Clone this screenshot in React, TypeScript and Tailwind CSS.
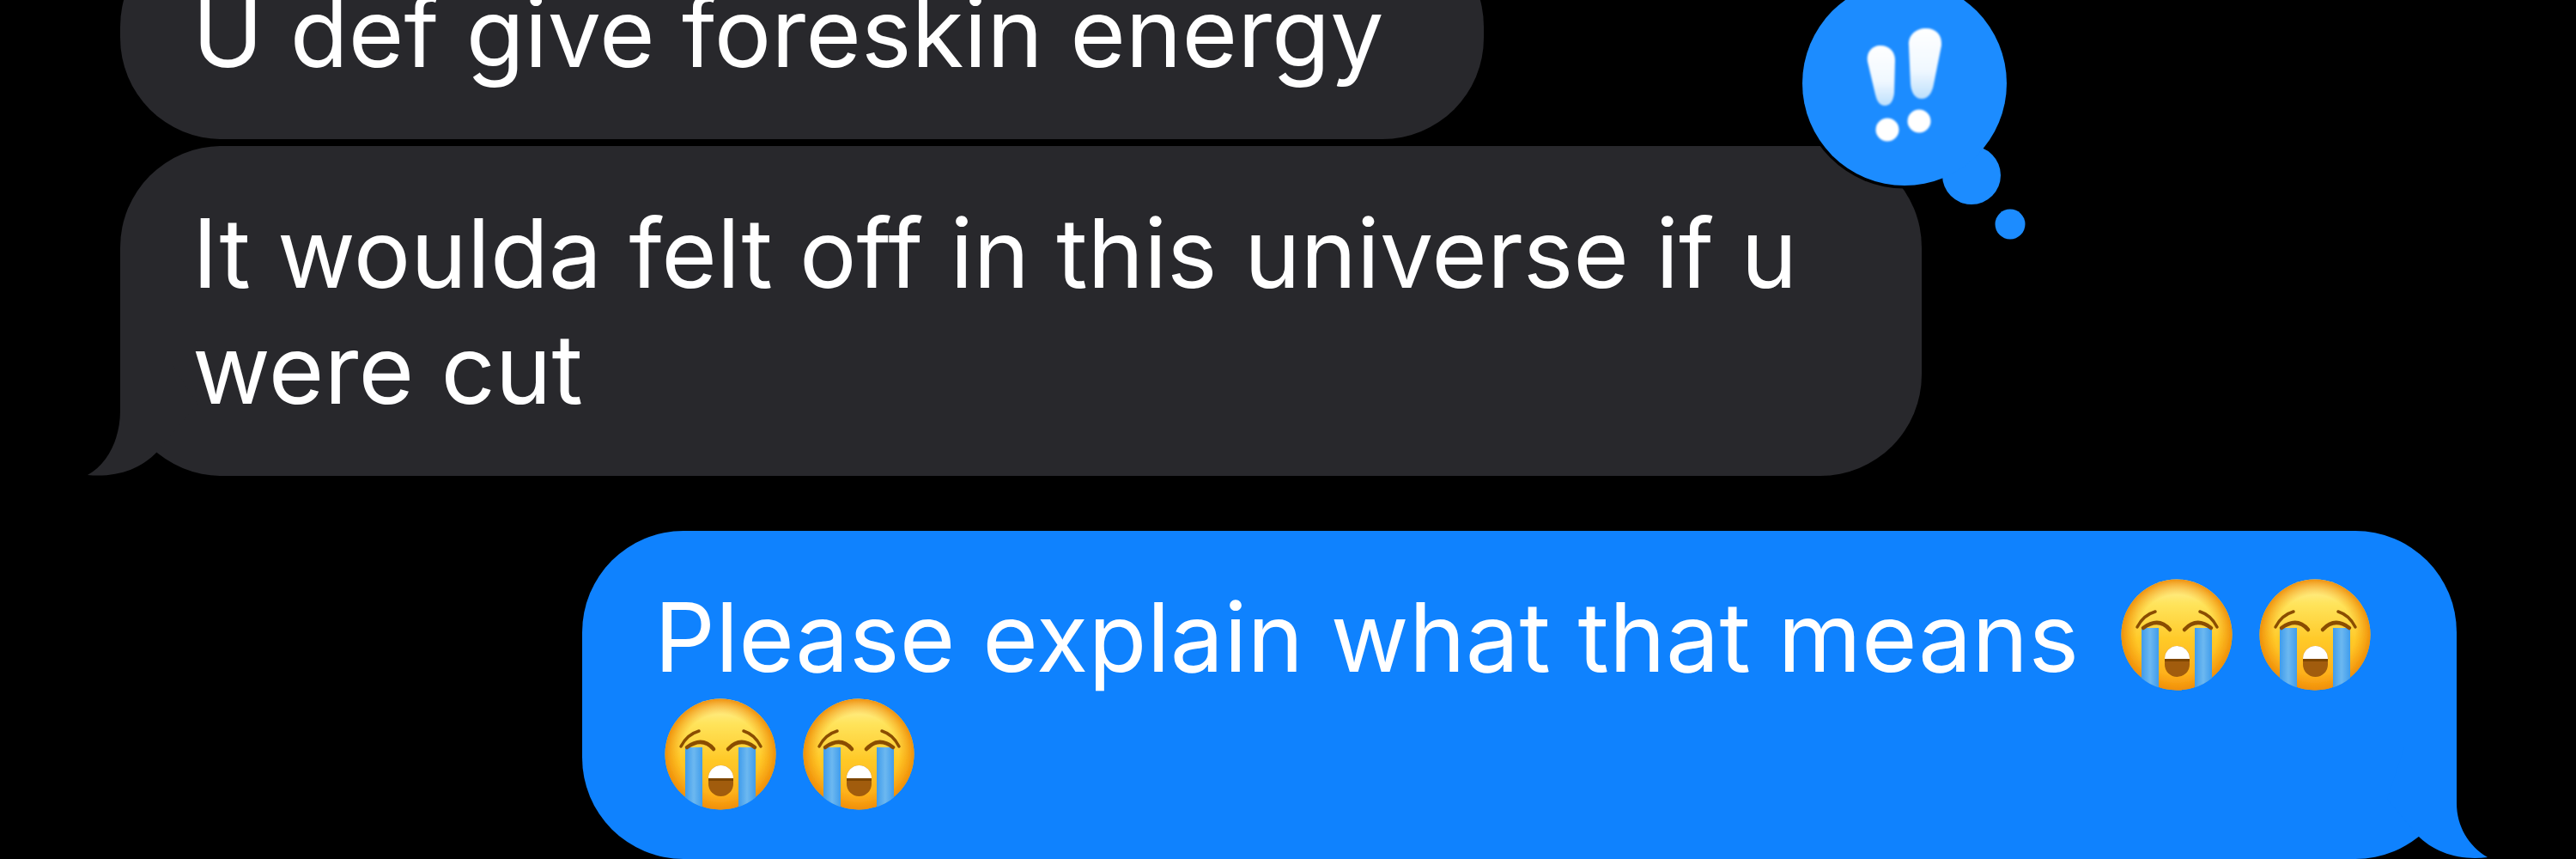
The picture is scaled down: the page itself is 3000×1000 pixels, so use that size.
const BUBBLE_FONT = "font-['Inter','Liberation_Sans',sans-serif]";

function CryingEmoji({ className = "" }: { className?: string }) {
  return (
    <svg viewBox="0 0 130 130" className={`inline-block w-[130px] h-[130px] ${className}`}>
      <defs>
        <linearGradient id="faceFill" x1="0" y1="0" x2="0" y2="1">
          <stop offset="0" stopColor="#fff3a6" />
          <stop offset="0.22" stopColor="#ffe45c" />
          <stop offset="0.55" stopColor="#ffc928" />
          <stop offset="1" stopColor="#fda516" />
        </linearGradient>
        <radialGradient id="faceEdge" cx="0.5" cy="0.5" r="0.5">
          <stop offset="0.72" stopColor="#f59a0c" stopOpacity="0" />
          <stop offset="1" stopColor="#ee8d08" stopOpacity="0.95" />
        </radialGradient>
        <linearGradient id="tearFill" x1="0" y1="0" x2="1" y2="0">
          <stop offset="0" stopColor="#3f9cec" />
          <stop offset="0.5" stopColor="#6db8f0" />
          <stop offset="1" stopColor="#3f9cec" />
        </linearGradient>
        <clipPath id="faceClip">
          <circle cx="65" cy="65" r="65" />
        </clipPath>
        <clipPath id="mouthClip">
          <rect x="51" y="78" width="29" height="36" rx="14.5" />
        </clipPath>
        <filter id="soften">
          <feGaussianBlur stdDeviation="0.6" />
        </filter>
      </defs>
      <g filter="url(#soften)">
        <circle cx="65" cy="65" r="64.5" fill="url(#faceFill)" />
        <circle cx="65" cy="65" r="64.5" fill="url(#faceEdge)" />
        <g clipPath="url(#faceClip)">
          <rect x="24" y="57" width="20" height="76" fill="url(#tearFill)" />
          <rect x="86" y="57" width="20" height="76" fill="url(#tearFill)" />
        </g>
        <g fill="none" stroke="#8a4d04" strokeLinecap="round">
          <path d="M19 56 Q26 42 40 38" strokeWidth="3.5" />
          <path d="M112 56 Q105 42 92 38" strokeWidth="3.5" />
          <path d="M26 57 Q44 44 57 59" strokeWidth="4.5" />
          <path d="M74 59 Q88 44 105 57" strokeWidth="4.5" />
        </g>
        <rect x="51" y="78" width="29" height="36" rx="14.5" fill="#a15c08" />
        <g clipPath="url(#mouthClip)">
          <rect x="51" y="78" width="29" height="16" fill="#ffffff" />
          <rect x="51" y="93" width="29" height="3" fill="#7d4503" />
        </g>
      </g>
    </svg>
  );
}

function Tapback() {
  return (
    <svg viewBox="2090 0 280 280" className="absolute left-[1950px] top-[-170px] w-[280px] h-[280px]">
      <defs>
        <linearGradient id="bangFill" x1="0" y1="0" x2="0" y2="1">
          <stop offset="0" stopColor="#ffffff" />
          <stop offset="0.6" stopColor="#f0f8ff" />
          <stop offset="1" stopColor="#bcdffc" />
        </linearGradient>
        <filter id="bangBlur">
          <feGaussianBlur stdDeviation="1" />
        </filter>
      </defs>
      <circle cx="2218" cy="97" r="122.5" fill="#000000" />
      <circle cx="2296" cy="204" r="34" fill="#1c8cff" />
      <circle cx="2218" cy="97" r="119" fill="#1c8cff" />
      <circle cx="2341" cy="261" r="17.5" fill="#1c8cff" />
      <g filter="url(#bangBlur)">
        <path
          d="M2190 53 C2200 53 2207 60 2207 70 L2206 108 C2205 118 2201 123 2195 123 C2189 123 2186 118 2184 110 L2175 72 C2173 61 2180 53 2190 53 Z"
          fill="url(#bangFill)"
        />
        <path
          d="M2243 33 C2255 33 2262 41 2261 53 L2252 98 C2250 109 2245 115 2238 115 C2231 115 2226 109 2225 98 L2223 53 C2222 41 2231 33 2243 33 Z"
          fill="url(#bangFill)"
        />
        <circle cx="2198" cy="151" r="13.5" fill="#ffffff" />
        <circle cx="2235" cy="141" r="13.5" fill="#ffffff" />
      </g>
    </svg>
  );
}

export default function App() {
  return (
    <div className={`h-[1000px] w-[3000px] overflow-hidden bg-black flex flex-col justify-end pl-[140px] pr-[139px] text-white text-[111px] leading-[135px] ${BUBBLE_FONT}`}>
      <div className="w-[1588px] bg-[#28282c] rounded-[118px] pl-[84px] pt-[57px] pb-[57px] shrink-0">
        U def give foreskin energy
      </div>

      <div className="relative w-[2098px] mt-[8px] bg-[#28282c] rounded-[118px] pl-[84px] py-[57px] shrink-0">
        It woulda felt off in this universe if u
        <br />
        were cut
        <Tapback />
        <svg viewBox="100 424 130 130" className="absolute left-[-40px] bottom-0 w-[130px] h-[130px]">
          <path
            d="M140 424 L140 478 C140 510 126 540 102 553 C135 556 163 547 183 526 L230 470 L200 424 Z"
            fill="#28282c"
          />
        </svg>
      </div>

      <div className="relative self-end w-[2183px] mt-[64px] bg-[#0f82fe] rounded-[118px] pl-[84px] pt-[54px] pb-[50px] leading-[139px] shrink-0">
        <span className="tracking-[0.25px]">Please explain what that means</span>{" "}
        <CryingEmoji className="align-[-22px] ml-[17px]" /> <CryingEmoji className="align-[-22px]" />
        <br />
        <CryingEmoji className="align-[-22px] ml-[12px]" /> <CryingEmoji className="align-[-22px]" />
        <svg viewBox="2780 870 120 130" className="absolute right-[-39px] bottom-0 w-[120px] h-[130px]">
          <path
            d="M2861 870 L2861 935 C2861 962 2875 985 2897 998 C2865 1002 2835 993 2815 972 L2780 930 L2800 870 Z"
            fill="#0f82fe"
          />
        </svg>
      </div>
    </div>
  );
}
